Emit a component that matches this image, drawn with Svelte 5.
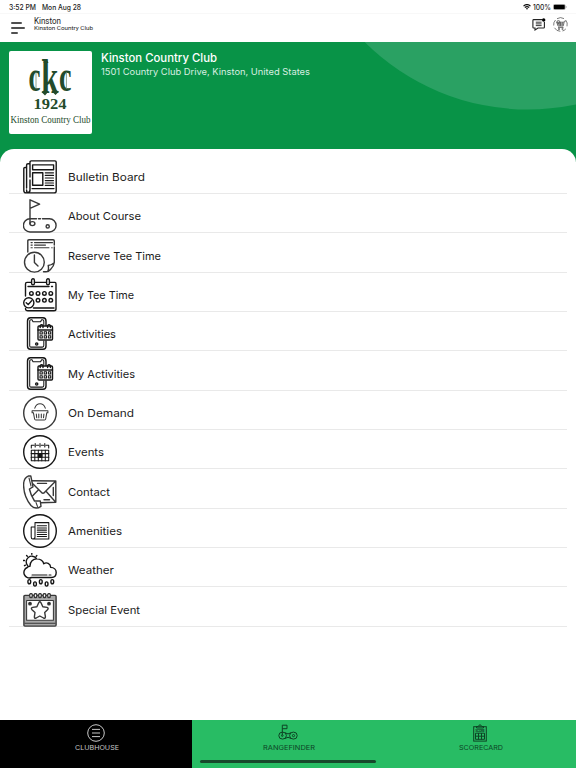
<script lang="ts">
  type MenuItem = { label: string; icon: string; width: number };

  const menu: MenuItem[] = [
    { label: "Bulletin Board", icon: "news", width: 77 },
    { label: "About Course", icon: "course", width: 73 },
    { label: "Reserve Tee Time", icon: "reserve", width: 93 },
    { label: "My Tee Time", icon: "teetime", width: 66 },
    { label: "Activities", icon: "activity", width: 48 },
    { label: "My Activities", icon: "activity", width: 67 },
    { label: "On Demand", icon: "basket", width: 66 },
    { label: "Events", icon: "events", width: 36 },
    { label: "Contact", icon: "contact", width: 42 },
    { label: "Amenities", icon: "amenities", width: 54 },
    { label: "Weather", icon: "weather", width: 46 },
    { label: "Special Event", icon: "special", width: 72 },
  ];

  const tabs = [
    { label: "CLUBHOUSE", icon: "list", width: 44 },
    { label: "RANGEFINDER", icon: "range", width: 52 },
    { label: "SCORECARD", icon: "score", width: 44 },
  ];

  let active = $state("CLUBHOUSE");
</script>

<!-- text fitted to a fixed advance width -->
{#snippet fitted(text: string, width: number, height: number)}
  <svg class="fitted" {width} {height}>
    <text x="0" y={height * 0.75} textLength={width} lengthAdjust="spacingAndGlyphs">{text}</text>
  </svg>
{/snippet}

{#snippet menuIcon(name: string)}
  <svg class="menu-icon {name}" viewBox="0 0 34 34">
    {#if name === "news"}
      <path d="M7 3V2Q7 .9 8.2 .9H32Q33.2 .9 33.2 2V31Q33.2 32.9 31 32.9H3Q.8 32.9 .8 30.5V8.5Q.8 7.5 2 7.5H3.6M3.6 28V5Q3.6 3.8 5 3.8H7V17M7 20V30Q7 32.5 4.8 32.5Q3.6 32.5 3.6 30" />
      <path d="M9.6 4.9H30.6V9.8H9.6ZM9.6 12.8H19.8V25.2H9.6Z" />
      <path d="M22.3 12.8H30.5M22.3 15.4H30.5M22.3 18H30.5M22.3 20.6H30.5M22.3 23H30.5M22.3 25.4H30.5M9 28.6H31" stroke-width="1.2" />
    {:else if name === "course"}
      <path d="M7 24.5V.8L16.6 5.2L7 9.4" />
      <path d="M13.5 19.8H7A6.6 6.6 0 0 0 7 33H26.5A6.6 6.6 0 0 0 26.5 19.8H19.5M15.5 19.8H17.5" />
      <ellipse cx="9.4" cy="24.6" rx="2.5" ry="2" /><circle cx="24.7" cy="27.4" r="1.6" />
    {:else if name === "reserve"}
      <path d="M4.8 13V2Q4.8 .8 6 .8H30Q31.3 .8 31.3 2V6M31.3 8V23.5Q31 27 27.5 30.5Q25.5 32.8 23 32.8H20.5M24.7 32.5Q26 30.5 25.2 26.5Q28 26.5 31.2 23.8" />
      <path class="thin" d="M8 3.6H9.3M11.5 3.6H29.5M8 6.1H9.3M11.5 6.1H22.5M8 8.8H9.3M11.5 8.8H26M28.7 8.8H29.2" />
      <circle cx="11.4" cy="23.2" r="9.9" /><path d="M11.4 16V23.5L15 27" />
    {:else if name === "teetime"}
      <path d="M2.5 18V6Q2.5 4.4 4 4.4H8.3M11.7 4.4H23.3M26.7 4.4H32Q33 4.4 33 6V31Q33 32.8 31 32.8H5Q2.5 32.8 2.5 30.5M5 8.5H26M28.5 8.5H29.5M10.5 30H31" />
      <rect x="8.6" y=".8" width="2.8" height="6" rx="1.4" /><rect x="23.6" y=".8" width="2.8" height="6" rx="1.4" />
      {#each [8.4, 15, 21.4, 27.8] as x}
        <circle cx={x} cy="15.4" r="1.8" />
        {#if x > 9}<circle cx={x} cy="22.3" r="1.8" />{/if}
      {/each}
      <circle cx="5.8" cy="24.8" r="5.1" fill="#fff" /><path d="M3.2 24.8L5.2 26.6L8.6 22.8" />
    {:else if name === "activity"}
      <path d="M23 8.5V4Q23 .8 20 .8H7.5Q4.5 .8 4.5 4V29Q4.5 32.2 7.5 32.2H20Q23 32.2 23 29V24" />
      <path class="thin" d="M20.8 8V4Q20.8 2.8 19.5 2.8H18.6L17.6 4.7H10L9 2.8H8Q6.7 2.8 6.7 4V28.7Q6.7 30.1 8 30.1H19.4Q20.8 30.1 20.8 28.5V24" />
      <circle cx="13.7" cy="27" r="1.1" />
      <rect x="15" y="9" width="14.5" height="14" rx="1" fill="#fff" />
      <path d="M15 13H29.5" />
      <path d="M17.2 10.6V8.7Q18.6 6.6 20 8.7V10.6M24.6 10.6V8.7Q26 6.6 27.4 8.7V10.6" />
      {#each [17, 21.2, 25.4] as x}
        <rect class="thin" {x} y="14.7" width="2.3" height="2.3" /><rect class="thin" {x} y="18.7" width="2.3" height="2.3" />
      {/each}
    {:else if name === "basket"}
      <circle cx="17" cy="17" r="16.3" />
      <path class="thin" d="M9.1 14.8H24.9V16.7H23.8L22.7 23Q22.5 24 21.5 24H12.8Q11.8 24 11.6 23L10.4 16.7H9.1ZM11.8 12.2C13.5 6.2 20.5 6.2 22.3 12.2M13.3 18L13.7 21.8M15.8 18V21.8M18.3 18V21.8M20.9 18L20.5 21.8" />
    {:else if name === "events"}
      <circle cx="17" cy="17" r="16.3" />
      <path class="thin" d="M8.3 13V10.3H11M13.5 10.3H15.7M18.3 10.3H20.5M23 10.3H25.7V13M12.2 8.5V12M17 8.5V12M21.8 8.5V12M8.3 15.3H25.7V25.7H8.3ZM8 18.6H26M8 22.2H26M11.8 15V26M15.3 15V26M18.8 15V26M22.3 15V26" />
      <path d="M15.3 18.6H18.8V22.2H15.3Z" fill="#161616" />
    {:else if name === "contact"}
      <path d="M9 5.8L32.8 6V27.3L17.5 27.8M9 8L18.6 17.6Q20 18.8 21.4 17.6L32.5 6.3M15.5 14.8L8 22.5M23 16.2L32.5 27M14.5 8.4H23.5M30.3 12.5V20.5M21 24.8H26.5" />
      <path d="M5.6 .9C1.5 2.7 .4 6.2 .6 10.5C.8 18 3.3 24.7 8 30.5C10.7 33.4 14.4 33.7 18 31.3L17.3 26L11.5 26C9.2 22.4 7.3 18.5 6.4 14L10 11.8L7.8 1Z" fill="#fff" />
      <path class="thin" d="M6 3L8 11M13 27.5L14.5 31.5" />
    {:else if name === "amenities"}
      <circle cx="17" cy="17" r="16.3" />
      <path class="thin" d="M12 8.6H25.8V25H9.8Q8.2 25 8.2 23V13H12M12 8.6V23Q12 25 9.8 25M14.3 11.8H23.5M14.3 14H23.5M14.3 16.1H23.5M14.3 18.3H23.5M14.3 20.5H23.5M14.3 22.5H23.5" />
    {:else if name === "weather"}
      <path d="M4.5 12.4A5.4 5.4 0 1 1 13.2 5.2M8.8 .2V1.2M3.6 2.5L4.3 3.2M.2 7.5H1.5M1.5 12.7L2.4 12.2M13.8 2.6L13.2 3.3" />
      <path d="M8.5 24.5A5.4 5.4 0 0 1 4.2 14.5Q5.2 13.2 7 13.3C6.8 8.5 10.3 5.7 14 5.9C17.5 6 20 8 20.8 10.8C23.5 8.8 27.4 10.4 27.7 14.4C31 14.5 33.2 16.8 33.2 19.6C33.2 22.5 31.3 24.5 28.5 24.5Z" />
      <path class="thin" d="M9 22H24M26 22H28" />
      {#each [6.3, 12, 17.8, 23.6, 29.3] as x, i}
        <ellipse cx={x} cy={i % 2 ? 31 : 28.7} rx="1.4" ry="2.1" />
      {/each}
    {:else if name === "special"}
      <rect x=".9" y="2.4" width="32.2" height="30.7" rx="1" fill="#a8a8a8" />
      <path class="thin" d="M3.6 7.4H30.4V27.3H3.6ZM2 30.3H32" fill="#fff" />
      {#each [8, 12.5, 17, 21.5, 26] as x}
        <ellipse cx={x} cy="2.6" rx="1.4" ry="2" fill="#fff" />
      {/each}
      <circle cx="7" cy="10.7" r="1.2" fill="#161616" /><circle cx="26" cy="10.7" r="1.2" fill="#161616" />
      <path d="M15.7 9.8Q16.8 7.8 18 9.8L19.8 13.8L24 14.4Q26 15 24.5 16.7L21.7 19.5L22.4 23.7Q22.4 25.8 20.5 25L16.8 23L13.2 25Q11.2 25.8 11.4 23.7L12 19.5L9 16.7Q7.5 15 9.7 14.4L13.9 13.8Z" />
    {/if}
  </svg>
{/snippet}

{#snippet tabIcon(name: string)}
  <svg class="tab-icon" viewBox="0 0 22 18">
    {#if name === "list"}
      <circle cx="11" cy="9" r="8.3" /><path d="M7 5.4H15M7 9H15M7 12.6H15" />
    {:else if name === "range"}
      <path d="M5.3 11V1.2H10V4.7H5.3M8 8.8Q11 11 14 8.8M8 14.4Q11 12.2 14 14.4" />
      <ellipse cx="5.6" cy="11.6" rx="3.8" ry="3.5" /><ellipse cx="16.4" cy="11.6" rx="3.8" ry="3.5" />
      <circle cx="5.3" cy="11.6" r=".8" /><circle cx="16.5" cy="11.6" r="1.1" />
    {:else}
      <rect x="4.7" y="2.7" width="12.6" height="14.4" />
      <path d="M7.5 2.5H9Q11-.8 13 2.5H14.5V4H7.5ZM6.5 9.2H15.5V15.3H6.5ZM6.5 12.2H15.5M9.5 9V15.5M12.5 9V15.5" />
      <text x="6.2" y="7.9" textLength="9.6">SCORE</text>
    {/if}
  </svg>
{/snippet}

<div class="screen">
  <div class="status">
    <span>{@render fitted("3:52 PM", 27, 10)}</span>
    <span class="date">{@render fitted("Mon Aug 28", 39, 10)}</span>
    <svg class="wifi" viewBox="0 0 8 6">
      <path d="M.5 2.1Q4-1 7.5 2.1M1.8 3.5Q4 1.6 6.2 3.5" /><path class="dot" d="M2.9 4.4Q4 3.5 5.1 4.4L4 5.7Z" />
    </svg>
    <span>{@render fitted("100%", 18, 10)}</span>
    <svg class="battery" viewBox="0 0 14 6">
      <rect x=".3" y=".3" width="12" height="5.4" rx="1.5" /><rect class="level" x=".8" y=".8" width="11" height="4.4" rx="1" /><path d="M13.2 2V4" />
    </svg>
  </div>

  <header>
    <button class="burger" aria-label="Menu"><i></i><i></i><i></i></button>
    <div class="heading">
      <span class="title">{@render fitted("Kinston", 27, 9)}</span>
      <span class="sub">{@render fitted("Kinston Country Club", 59, 7)}</span>
    </div>
    <svg class="chat" viewBox="0 0 14 13">
      <path d="M10.5 1.6H1.7Q.9 1.6 .9 2.4V9.2Q.9 10 1.7 10H3V12L6 10H11.6Q12.4 10 12.4 9.2V4" />
      <path d="M3.8 4.2H9.6M3.8 5.9H9.6M3.8 7.6H9.6" stroke-width=".9" /><circle cx="11.7" cy="2" r="1.7" />
    </svg>
    <svg class="cart" viewBox="0 0 15 15">
      <path d="M.7 8.5A6.8 6.8 0 0 1 2.5 3M4 1.7A6.8 6.8 0 0 1 11 1.6M12.6 3A6.8 6.8 0 0 1 14 9.3M12.8 11.9A6.8 6.8 0 0 1 9.6 14M7.3 14.3A6.8 6.8 0 0 1 1.5 10.8" />
      <path d="M12.7 4.2H11.4L10.2 9.1H5L3.7 5.2H11.1M4.4 7H10.6M5.7 5.2L6.3 9M7.5 5.2V9M9.3 5.2L9 9M5 10.5H10.5" />
      <circle cx="5.4" cy="5" r="1.5" /><circle cx="6" cy="12" r=".7" /><circle cx="9.5" cy="12" r=".7" />
    </svg>
  </header>

  <section class="banner">
    <svg class="arc" viewBox="0 0 576 120"><circle cx="528" cy="-164" r="231.5" /></svg>
    <svg class="logo" viewBox="0 0 83 83">
      <g class="monogram">
        <text x="19.5" y="40" font-size="45" textLength="12" lengthAdjust="spacingAndGlyphs">c</text>
        <text x="32.2" y="42" font-size="48" textLength="17" lengthAdjust="spacingAndGlyphs">k</text>
        <text x="50" y="40" font-size="45" textLength="12.5" lengthAdjust="spacingAndGlyphs">c</text>
        <path class="hairline" d="M27 21V38M57.4 21V38" />
        <path class="flourish" d="M34 12L38 9L39.5 12ZM32.5 41L36 39L39 41L36 44.5ZM43.5 41L46.5 39L50 40.5L46.5 44Z" />
      </g>
      <text class="year" x="24.5" y="58.2" font-size="15.5" textLength="33" lengthAdjust="spacingAndGlyphs">1924</text>
      <text x="1.5" y="71.5" font-size="9.4" textLength="80" lengthAdjust="spacingAndGlyphs">Kinston Country Club</text>
    </svg>
    <div class="club">
      <h1>{@render fitted("Kinston Country Club", 116, 14)}</h1>
      <p>{@render fitted("1501 Country Club Drive, Kinston, United States", 209, 12)}</p>
    </div>
  </section>

  <main>
    {#each menu as item}
      <button class="row">
        {@render menuIcon(item.icon)}
        <span class="label">{@render fitted(item.label, item.width, 16)}</span>
      </button>
    {/each}
  </main>

  <nav>
    {#each tabs as tab}
      <button class:active={active === tab.label} onclick={() => (active = tab.label)}>
        {@render tabIcon(tab.icon)}
        <span class="tab-label">{@render fitted(tab.label, tab.width, 9)}</span>
      </button>
    {/each}
    <div class="home-indicator"></div>
  </nav>
</div>

<style>
  :global(body) {
    margin: 0;
  }

  .screen {
    width: 576px;
    height: 768px;
    display: flex;
    flex-direction: column;
    overflow: hidden;
    background: #fff;
    color: #1c1c1c;
    font-family: Inter, "Liberation Sans", sans-serif;
  }

  button {
    font: inherit;
    color: inherit;
    border: 0;
    padding: 0;
    background: none;
    text-align: left;
  }

  svg {
    display: block;
    flex: none;
  }

  .fitted {
    overflow: visible;
  }

  .fitted text {
    fill: currentColor;
  }

  .status {
    box-sizing: border-box;
    height: 14px;
    display: flex;
    align-items: center;
    padding: 0 9px;
    font-size: 7px;
    font-weight: 500;
    border-bottom: 1px solid #f8f8f8;
  }

  .date {
    margin-left: 6px;
    margin-right: auto;
  }

  .wifi {
    width: 8px;
    height: 6px;
    margin-right: 2px;
    fill: none;
    stroke: #111;
    stroke-width: 1.2;
  }

  .wifi .dot {
    fill: #111;
    stroke: none;
  }

  .battery {
    width: 14px;
    height: 6px;
    margin-left: 2px;
    fill: none;
    stroke: #999;
    stroke-width: 0.6;
  }

  .battery .level {
    fill: #000;
    stroke: none;
  }

  header {
    box-sizing: border-box;
    height: 28px;
    display: flex;
    align-items: flex-start;
    padding: 0 8px 0 11px;
  }

  .burger {
    width: 15px;
    height: 12px;
    margin-top: 8px;
    display: flex;
    flex-direction: column;
    justify-content: space-between;
  }

  .burger i {
    width: 11px;
    height: 2px;
    border-radius: 1px;
    background: #505050;
  }

  .burger i:nth-child(2) {
    width: 14px;
  }

  .burger i:nth-child(3) {
    width: 7px;
  }

  .heading {
    margin: 3px auto 0 8px;
    font-family: Roboto, sans-serif;
  }

  .title {
    display: block;
    font-size: 8.4px;
  }

  .sub {
    display: block;
    font-size: 6.2px;
    margin-top: -1px;
  }

  .chat,
  .cart {
    fill: none;
    stroke: #222;
  }

  .chat {
    width: 14px;
    height: 13px;
    margin: 4px 7px 0 0;
    stroke-width: 1.1;
  }

  .chat circle {
    fill: #000;
    stroke: none;
  }

  .cart {
    width: 15px;
    height: 15px;
    margin-top: 3px;
    stroke: #444;
    stroke-width: 0.7;
  }

  .banner {
    position: relative;
    box-sizing: border-box;
    height: 120px;
    flex: none;
    display: flex;
    align-items: flex-start;
    gap: 9px;
    padding: 9px 9px 0;
    background: #089347;
    color: #fff;
  }

  .arc {
    position: absolute;
    inset: 0;
    width: 576px;
    height: 120px;
    fill: #2aa163;
  }

  .logo {
    position: relative;
    width: 83px;
    height: 83px;
    border-radius: 2px;
    background: #fff;
    fill: #234b2b;
    font-family: "Liberation Serif", serif;
  }

  .monogram {
    font-weight: 700;
  }

  .hairline {
    fill: none;
    stroke: #6f8a74;
    stroke-width: 0.8;
  }

  .flourish {
    fill: #234b2b;
  }

  .year {
    font-weight: 700;
  }

  .club {
    position: relative;
  }

  h1,
  p {
    margin: 0;
    font-weight: 400;
  }

  h1 {
    font-size: 11.2px;
    font-weight: 500;
  }

  p {
    margin-top: 1px;
    font-size: 9px;
    color: #d8eee1;
  }

  main {
    position: relative;
    box-sizing: border-box;
    height: 571px;
    margin-top: -13px;
    flex: none;
    padding: 5.6px 9px 0;
    border-radius: 14px 14px 0 0;
    background: #fff;
  }

  .row {
    box-sizing: border-box;
    width: 100%;
    height: 39.33px;
    display: flex;
    align-items: flex-end;
    padding-left: 13.6px;
    border-bottom: 1px solid #e9e9e9;
  }

  .menu-icon {
    width: 34px;
    height: 34px;
    margin-bottom: -1px;
    fill: none;
    stroke: #161616;
    stroke-width: 1.4;
    stroke-linecap: round;
    stroke-linejoin: round;
  }

  .menu-icon .thin {
    stroke-width: 1.05;
  }

  .reserve,
  .contact,
  .course,
  .special,
  .basket {
    stroke: #383838;
  }

  .label {
    margin: 0 0 8px 11.4px;
    font-size: 10.8px;
  }

  nav {
    position: relative;
    height: 48px;
    display: grid;
    grid-template-columns: repeat(3, 1fr);
    background: #28bc64;
  }

  nav button {
    display: flex;
    flex-direction: column;
    align-items: center;
    gap: 1px;
    padding-top: 4px;
    font-size: 6.7px;
    color: #0d4324;
  }

  nav button.active {
    background: #000;
    color: #c8c8c8;
  }

  .tab-icon {
    width: 22px;
    height: 18px;
    fill: none;
    stroke: currentColor;
    stroke-width: 1;
  }

  .tab-icon text {
    font-size: 3.2px;
    font-weight: 700;
    fill: currentColor;
    stroke: none;
  }

  .tab-label {
    padding-left: 2px;
  }

  .home-indicator {
    position: absolute;
    left: 200px;
    bottom: 5px;
    width: 176px;
    height: 3px;
    border-radius: 2px;
    background: #17492b;
  }
</style>
